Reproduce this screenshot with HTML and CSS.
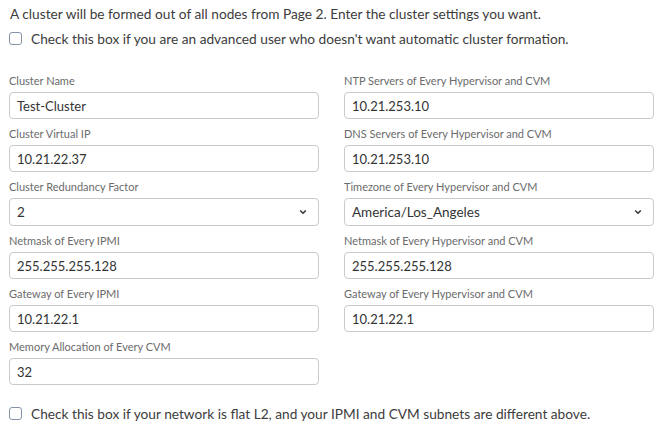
FILE: index.html
```html
<!DOCTYPE html>
<html>
<head>
<meta charset="utf-8">
<link rel="stylesheet" href="styles.css">
</head>
<body>
<div class="page">
  <p class="intro">A cluster will be formed out of all nodes from Page 2. Enter the cluster settings you want.</p>
  <label class="check"><span class="box"></span><span>Check this box if you are an advanced user who doesn't want automatic cluster formation.</span></label>

  <div class="grid">
    <div class="col">
      <div class="field"><div class="lbl">Cluster Name</div><div class="input">Test-Cluster</div></div>
      <div class="field"><div class="lbl">Cluster Virtual IP</div><div class="input">10.21.22.37</div></div>
      <div class="field"><div class="lbl">Cluster Redundancy Factor</div><div class="input select">2<svg class="chev" width="8" height="6" viewBox="0 0 8 6"><path d="M1.2 1.5 L4 4.3 L6.8 1.5" fill="none" stroke="#333" stroke-width="1.5"/></svg></div></div>
      <div class="field"><div class="lbl">Netmask of Every IPMI</div><div class="input">255.255.255.128</div></div>
      <div class="field"><div class="lbl">Gateway of Every IPMI</div><div class="input">10.21.22.1</div></div>
      <div class="field"><div class="lbl">Memory Allocation of Every CVM</div><div class="input">32</div></div>
    </div>
    <div class="col">
      <div class="field"><div class="lbl">NTP Servers of Every Hypervisor and CVM</div><div class="input">10.21.253.10</div></div>
      <div class="field"><div class="lbl">DNS Servers of Every Hypervisor and CVM</div><div class="input">10.21.253.10</div></div>
      <div class="field"><div class="lbl">Timezone of Every Hypervisor and CVM</div><div class="input select">America/Los_Angeles<svg class="chev" width="8" height="6" viewBox="0 0 8 6"><path d="M1.2 1.5 L4 4.3 L6.8 1.5" fill="none" stroke="#333" stroke-width="1.5"/></svg></div></div>
      <div class="field"><div class="lbl">Netmask of Every Hypervisor and CVM</div><div class="input">255.255.255.128</div></div>
      <div class="field"><div class="lbl">Gateway of Every Hypervisor and CVM</div><div class="input">10.21.22.1</div></div>
    </div>
  </div>

  <label class="check bottom"><span class="box"></span><span>Check this box if your network is flat L2, and your IPMI and CVM subnets are different above.</span></label>
</div>
</body>
</html>
```
FILE: styles.css
```css
html, body {
  margin: 0;
  padding: 0;
  background: #fff;
}
.page {
  font-family: Lato, "Liberation Sans", sans-serif;
  color: #3c3c3c;
  padding: 5px 10px 0 9px;
  width: 645px;
}
.intro {
  margin: 0;
  font-size: 13.7px;
  line-height: 17px;
  padding-left: 1px;
}
.check {
  display: flex;
  align-items: center;
  gap: 9px;
  font-size: 13.7px;
  line-height: 17px;
  margin-top: 8px;
}
.box {
  width: 11px;
  height: 11px;
  border: 1px solid #8593a6;
  border-radius: 3px;
  flex: none;
}
.grid {
  display: grid;
  grid-template-columns: 310px 310px;
  column-gap: 25px;
  margin-top: 27px;
}
.col {
  display: flex;
  flex-direction: column;
  gap: 8px;
}
.lbl {
  font-size: 11px;
  line-height: 14px;
  color: #6b6b6b;
  margin-bottom: 4px;
}
.input {
  height: 25px;
  border: 1px solid #cacaca;
  border-radius: 4px;
  box-sizing: content-box;
  padding: 0 7px;
  display: flex;
  align-items: center;
  font-size: 13px;
  color: #333;
}
.select {
  height: 26px;
  justify-content: space-between;
  padding: 0 11px 0 7px;
  font-size: 13.5px;
}
.chev {
  flex: none;
}
.check.bottom {
  margin-top: 20px;
}
```
